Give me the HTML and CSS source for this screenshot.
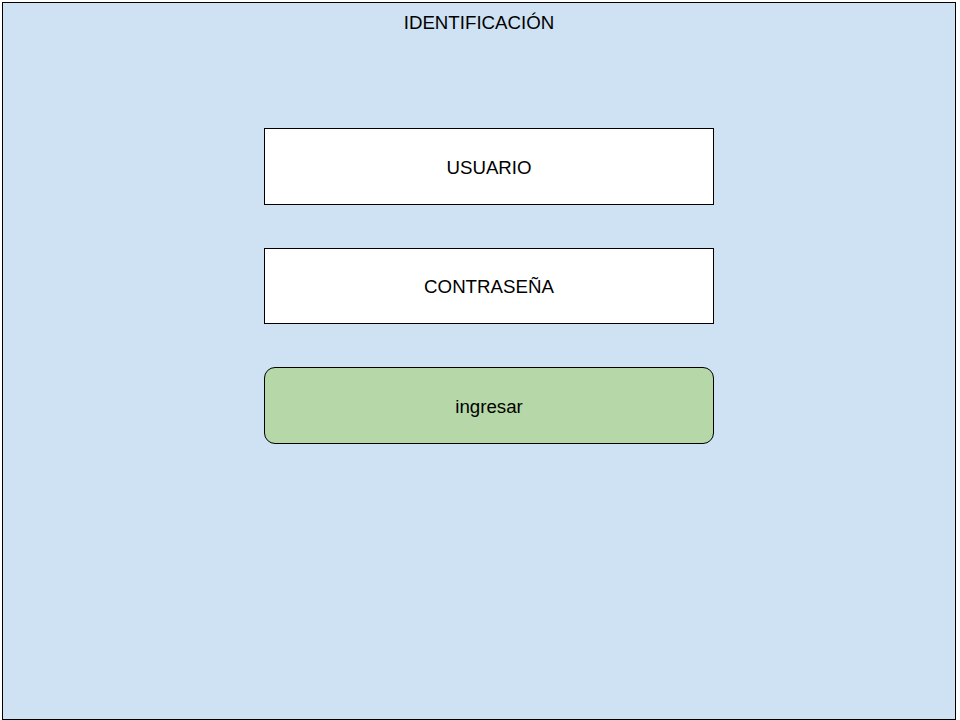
FILE: index.html
```html
<!DOCTYPE html>
<html lang="es">
<head>
<meta charset="utf-8">
<title>Identificación</title>
<link rel="stylesheet" href="styles.css">
</head>
<body>
<div class="frame">
  <div class="title">IDENTIFICACIÓN</div>
  <div class="form">
    <div class="field">USUARIO</div>
    <div class="field field-short">CONTRASEÑA</div>
    <div class="button">ingresar</div>
  </div>
</div>
</body>
</html>
```
FILE: styles.css
```css
html, body {
  margin: 0;
  padding: 0;
  background: #ffffff;
}
body {
  font-family: "Liberation Sans", Arial, sans-serif;
  color: #000000;
}
.frame {
  box-sizing: border-box;
  margin: 2px 0 0 2px;
  width: 954px;
  height: 718px;
  background: #cfe2f3;
  border: 1px solid #000000;
  display: flex;
  flex-direction: column;
}
.title {
  text-align: center;
  font-size: 18.7px;
  line-height: 20px;
  padding-top: 10px;
  height: 20px;
}
.form {
  margin-top: 95px;
  margin-left: 261px;
  width: 450px;
  display: flex;
  flex-direction: column;
  gap: 43px;
}
.field, .button {
  box-sizing: border-box;
  height: 77px;
  padding-top: 2px;
  border: 1px solid #000000;
  display: flex;
  align-items: center;
  justify-content: center;
  font-size: 18.7px;
}
.field {
  background: #ffffff;
}
.field-short {
  height: 76px;
}
.button {
  background: #b6d7a8;
  border-radius: 11px;
}
```
